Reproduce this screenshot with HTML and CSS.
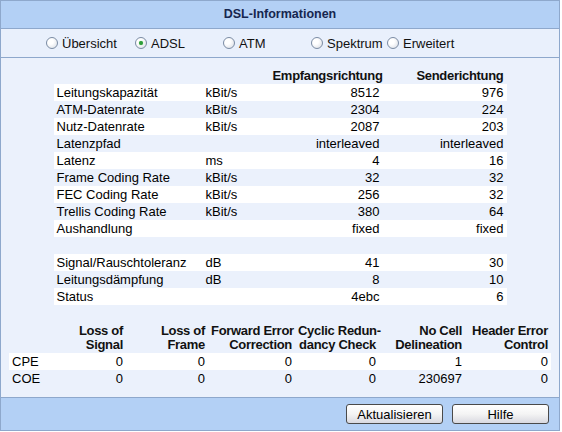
FILE: index.html
```html
<!DOCTYPE html>
<html>
<head>
    <title>DSL-Informationen</title>
    <link rel="stylesheet" href="styles.css">
</head>
<body>
    <div class="frame">
        <div class="title">DSL-Informationen</div>

        <div class="tabs">
            <label class="tab tab-1"><span class="radio"></span>Übersicht</label>
            <label class="tab tab-2"><span class="radio checked"><span class="dot"></span></span>ADSL</label>
            <label class="tab tab-3"><span class="radio"></span>ATM</label>
            <label class="tab tab-4"><span class="radio"></span>Spektrum</label>
            <label class="tab tab-5"><span class="radio"></span>Erweitert</label>
        </div>

        <div class="content">
            <table class="info">
                <colgroup>
                    <col class="c-label">
                    <col class="c-unit">
                    <col class="c-down">
                    <col class="c-up">
                </colgroup>
                <tr class="head">
                    <td></td><td></td>
                    <td class="num">Empfangsrichtung</td>
                    <td class="num">Senderichtung</td>
                </tr>
                <tr class="light"><td>Leitungskapazität</td><td>kBit/s</td><td class="num">8512</td><td class="num">976</td></tr>
                <tr><td>ATM-Datenrate</td><td>kBit/s</td><td class="num">2304</td><td class="num">224</td></tr>
                <tr class="light"><td>Nutz-Datenrate</td><td>kBit/s</td><td class="num">2087</td><td class="num">203</td></tr>
                <tr><td>Latenzpfad</td><td></td><td class="num">interleaved</td><td class="num">interleaved</td></tr>
                <tr class="light"><td>Latenz</td><td>ms</td><td class="num">4</td><td class="num">16</td></tr>
                <tr><td>Frame Coding Rate</td><td>kBit/s</td><td class="num">32</td><td class="num">32</td></tr>
                <tr class="light"><td>FEC Coding Rate</td><td>kBit/s</td><td class="num">256</td><td class="num">32</td></tr>
                <tr><td>Trellis Coding Rate</td><td>kBit/s</td><td class="num">380</td><td class="num">64</td></tr>
                <tr class="light"><td>Aushandlung</td><td></td><td class="num">fixed</td><td class="num">fixed</td></tr>
                <tr><td></td><td></td><td></td><td></td></tr>
                <tr class="light"><td>Signal/Rauschtoleranz</td><td>dB</td><td class="num">41</td><td class="num">30</td></tr>
                <tr><td>Leitungsdämpfung</td><td>dB</td><td class="num">8</td><td class="num">10</td></tr>
                <tr class="light"><td>Status</td><td></td><td class="num">4ebc</td><td class="num">6</td></tr>
            </table>

            <table class="errors">
                <colgroup>
                    <col class="e-label">
                    <col class="e-w82">
                    <col class="e-w82">
                    <col class="e-w87">
                    <col class="e-w84">
                    <col class="e-w86">
                    <col class="e-w86">
                </colgroup>
                <tr class="head">
                    <td></td>
                    <td class="num">Loss of<br>Signal</td>
                    <td class="num">Loss of<br>Frame</td>
                    <td class="num">Forward Error<br>Correction</td>
                    <td class="num">Cyclic Redun-<br>dancy Check</td>
                    <td class="num">No Cell<br>Delineation</td>
                    <td class="num">Header Error<br>Control</td>
                </tr>
                <tr class="light"><td>CPE</td><td class="num">0</td><td class="num">0</td><td class="num">0</td><td class="num">0</td><td class="num">1</td><td class="num">0</td></tr>
                <tr><td>COE</td><td class="num">0</td><td class="num">0</td><td class="num">0</td><td class="num">0</td><td class="num">230697</td><td class="num">0</td></tr>
            </table>
        </div>

        <div class="footer">
            <button class="btn">Aktualisieren</button>
            <button class="btn">Hilfe</button>
        </div>
    </div>
</body>
</html>
```

FILE: styles.css
```css
* {
    margin: 0;
    padding: 0;
    box-sizing: border-box;
}

body {
    font-family: "Liberation Sans", Arial, sans-serif;
    font-size: 13px;
    color: #000;
    background: #fff;
}

.frame {
    width: 560px;
    height: 431px;
    border: 1px solid #8ea8cc;
    display: flex;
    flex-direction: column;
}

.title {
    height: 28px;
    background: #b3d0f5;
    border-bottom: 1px solid #8ea8cc;
    text-align: center;
    font-weight: bold;
    font-size: 12.5px;
    line-height: 27px;
    color: #16264f;
}

.tabs {
    height: 29px;
    background: #e9f0fc;
    border-bottom: 1px solid #8ea8cc;
    display: flex;
    align-items: center;
    padding-left: 45px;
    color: #111;
}

.tab {
    display: flex;
    align-items: center;
    gap: 4px;
}

.tab-1 { width: 89px; }
.tab-2 { width: 88px; }
.tab-3 { width: 88px; }
.tab-4 { width: 76px; }

.radio {
    width: 12px;
    height: 12px;
    border-radius: 50%;
    border: 1px solid #7b8ca4;
    background: radial-gradient(circle at 35% 35%, #ffffff 30%, #d6dae2 100%);
    display: flex;
    align-items: center;
    justify-content: center;
}

.radio .dot {
    width: 4px;
    height: 4px;
    border-radius: 50%;
    background: #2f9c3a;
    box-shadow: 0 0 1px #5bc55f;
}

.content {
    flex: 1;
    background: #ebf1fc;
    border-bottom: 1px solid #8ea8cc;
    padding-top: 9px;
}

table {
    border-collapse: collapse;
    table-layout: fixed;
    margin: 0 auto;
}

td {
    height: 17px;
    line-height: 17px;
    padding: 0 3px;
    white-space: nowrap;
}

.num {
    text-align: right;
}

.head td {
    font-weight: bold;
    letter-spacing: -0.3px;
    color: #111;
}

.light td {
    background: #fff;
}

.info {
    width: 453px;
}

.c-label { width: 149px; }
.c-unit { width: 67px; }
.c-down { width: 113px; }
.c-up { width: 124px; }

.errors {
    width: 542px;
    margin-top: 19px;
}

.e-label { width: 35px; }
.e-w82 { width: 82px; }
.e-w84 { width: 84px; }
.e-w86 { width: 86px; }
.e-w87 { width: 87px; }

.errors .head td {
    height: 29px;
    line-height: 14px;
    padding-bottom: 1px;
    vertical-align: bottom;
}

.footer {
    height: 32px;
    background: #b3d0f5;
    display: flex;
    justify-content: flex-end;
    align-items: flex-start;
    gap: 9px;
    padding: 6px 10px 0 0;
}

.btn {
    width: 97px;
    height: 20px;
    font-family: "Liberation Sans", Arial, sans-serif;
    font-size: 13px;
    color: #000;
    border: 1px solid #4a4a4a;
    border-radius: 3px;
    background: linear-gradient(#ffffff, #f4f4f4 50%, #d9d9e0);
    cursor: pointer;
}
```
